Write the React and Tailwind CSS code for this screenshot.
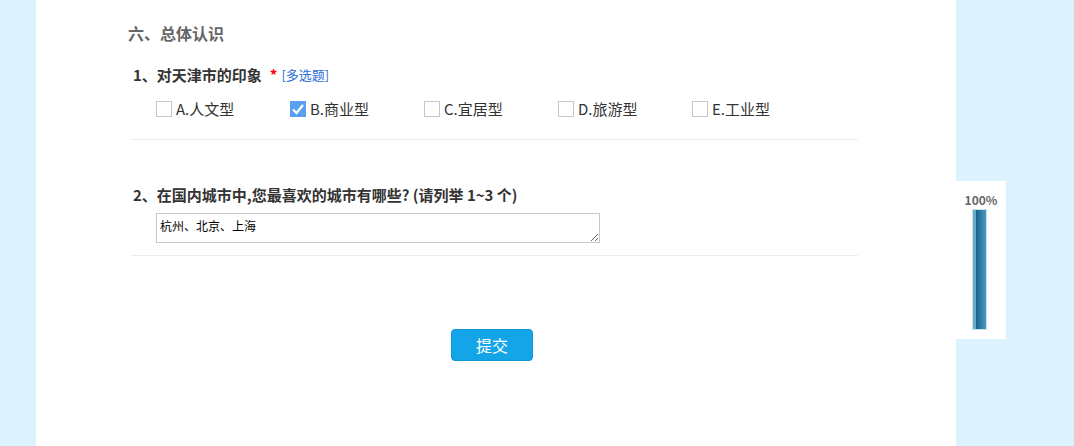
import React, { useState } from "react";

const options = [
  { id: "A", label: "A.人文型" },
  { id: "B", label: "B.商业型" },
  { id: "C", label: "C.宜居型" },
  { id: "D", label: "D.旅游型" },
  { id: "E", label: "E.工业型" },
];

const CheckBox = ({ checked }) => (
  <span
    className={`w-[16px] h-[16px] flex items-center justify-center shrink-0 ${
      checked ? "bg-[#5aa0f0]" : "border border-[#c8c8c8] bg-white"
    }`}
  >
    {checked && (
      <svg width="14" height="14" viewBox="0 0 14 14">
        <path d="M2 7.5 L5.5 11 L12 3" fill="none" stroke="#fff" strokeWidth="2.2" />
      </svg>
    )}
  </span>
);

const App = () => {
  const [picked, setPicked] = useState(["B"]);

  const toggle = (id) =>
    setPicked((p) => (p.includes(id) ? p.filter((x) => x !== id) : [...p, id]));

  return (
    <div
      className="w-[1074px] h-[446px] bg-[#dcf2fd] flex overflow-hidden"
      style={{ fontFamily: '"Noto Sans CJK SC", "Noto Sans", sans-serif' }}
    >
      <div className="w-[36px] shrink-0" />
      <div className="w-[920px] h-full bg-white shrink-0">
        <div className="ml-[95px] w-[727px] pt-[21px]">
          <h2 className="text-[16px] leading-[24px] font-bold text-[#666] -ml-[3px]">六、总体认识</h2>

          {/* 第1题 */}
          <div className="border-b border-[#ececec] pb-[19px]">
            <div className="mt-[19px] ml-[2px] flex items-center h-[22px]">
              <span className="text-[15px] font-bold text-[#333]">1、对天津市的印象</span>
              <span className="text-[#f00] font-bold text-[15px] ml-[8px]">*</span>
              <span className="text-[13px] text-[#2a6cd8] ml-[4px]">[多选题]</span>
            </div>
            <div className="mt-[12px] ml-[25px] flex h-[22px] items-center">
              {options.map((o) => (
                <label
                  key={o.id}
                  onClick={() => toggle(o.id)}
                  className="w-[134px] flex items-center gap-[4px] cursor-pointer"
                >
                  <CheckBox checked={picked.includes(o.id)} />
                  <span className="text-[15px] text-[#333]">{o.label}</span>
                </label>
              ))}
            </div>
          </div>

          {/* 第2题 */}
          <div className="border-b border-[#ececec] pb-[12px]">
            <div className="mt-[44px] ml-[2px] h-[22px] flex items-center text-[15px] font-bold text-[#333]">
              2、在国内城市中,您最喜欢的城市有哪些? (请列举 1~3 个)
            </div>
            <textarea
              defaultValue="杭州、北京、上海"
              className="block mt-[7px] ml-[25px] w-[444px] h-[30px] border border-[#c8c8c8] px-[3px] py-[4px] text-[12px] leading-[16px] text-black outline-none"
            />
          </div>

          <button className="mt-[73px] ml-[320px] w-[82px] h-[32px] rounded-[4px] bg-[#14a5e8] border border-[#1096d6] text-white text-[16px]">
            提交
          </button>
        </div>
      </div>

      <div className="mt-[181px] w-[50px] h-[158px] bg-white shrink-0 flex flex-col items-center">
        <div className="mt-[12px] text-[12px] leading-[14px] font-bold text-[#666]">100%</div>
        <div className="mt-[2px] -ml-[3px] w-[15px] h-[121px] border border-[#c6dfee] bg-[linear-gradient(to_right,#6aa8c6_0%,#6aa8c6_22%,#15638e_26%,#4e98bd_100%)]" />
      </div>
    </div>
  );
};

export default App;
